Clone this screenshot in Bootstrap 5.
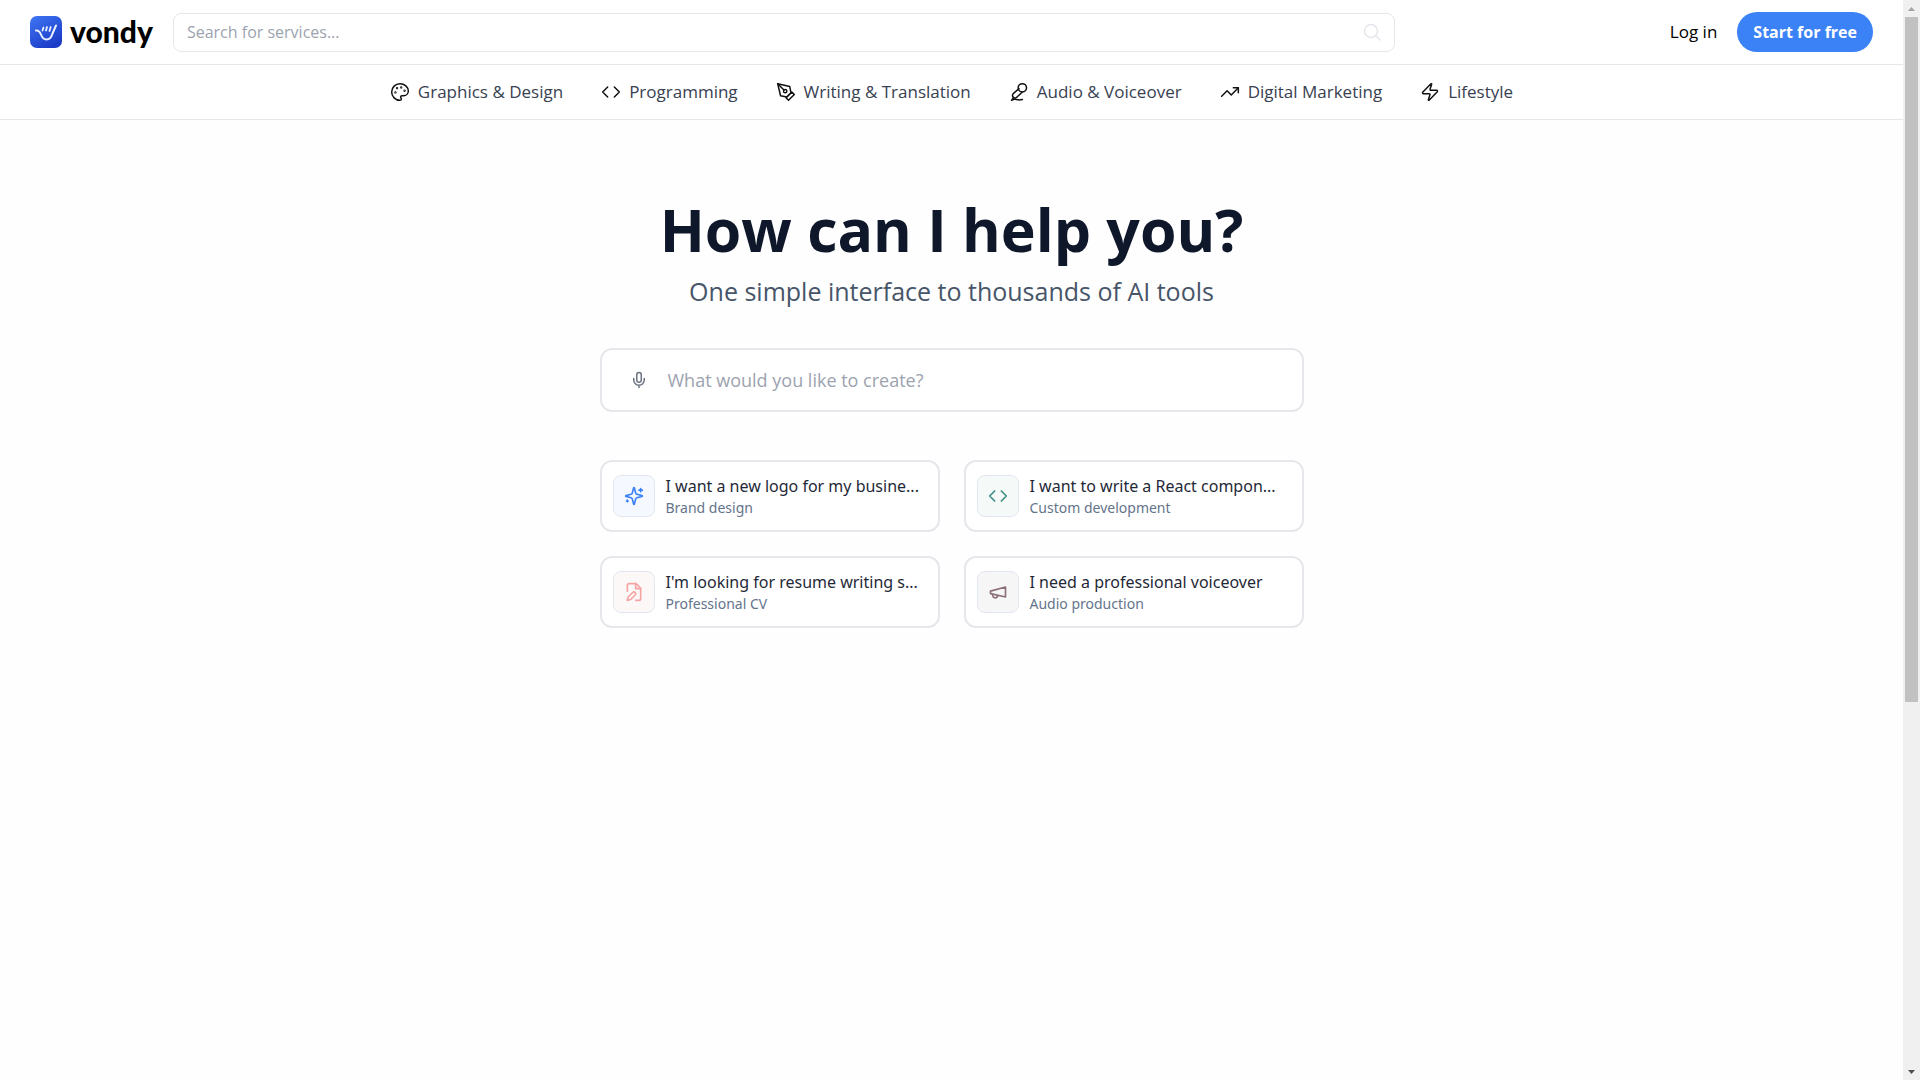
<!DOCTYPE html>
<html lang="en">
<head>
<meta charset="utf-8">
<meta name="viewport" content="width=device-width, initial-scale=1">
<title>Vondy</title>
<link href="https://cdn.jsdelivr.net/npm/bootstrap@5.3.0/dist/css/bootstrap.min.css" rel="stylesheet">
<style>
body{font-family:"Open Sans","Noto Sans",sans-serif;font-size:16px;line-height:24px;color:#1f2937;background:#fefefe}
a{color:inherit;text-decoration:none}
svg{flex:none;display:block}
.line-icon{fill:none;stroke:currentColor;stroke-width:2;stroke-linecap:round;stroke-linejoin:round}
.rule-bottom{border-bottom:1px solid #e5e7eb}
.topbar{height:65px;padding:0 30px}
.brand-link{gap:8px;margin-right:20px}
.wordmark{font-family:Lato,sans-serif;font-weight:900;font-size:30px;line-height:32px;color:#000;padding-bottom:2px}
.site-search{width:66.3%;height:39px;border:1px solid #e5e7eb;border-radius:8px;padding:0 13px}
.bare-input{border:0;outline:0;background:transparent;padding:0;min-width:0}
.bare-input::placeholder{color:#9ca3af;opacity:1}
.login-link{font-size:17px}
.start-btn{height:40px;padding:0 16px;border:0;border-radius:20px;background:#3b82f6;color:#fff;font-weight:700}
.topics{height:55px;gap:38px;color:#374151;font-size:17px}
.topics svg{color:#111;stroke-width:1.8}
.hero-title{font-size:59px;line-height:72px;font-weight:700;color:#0f172a;margin:0}
.hero-sub{font-size:25px;line-height:32px;color:#475569;margin:10px 0 0}
.hero{max-width:704px;padding-top:73px}
.prompt{height:64px;border:2px solid #e5e7eb;border-radius:12px;padding:0 28px;margin-top:41px;gap:20px;font-size:18px;color:#6b7280}
.ideas{margin-top:24px;--bs-gutter-x:24px;--bs-gutter-y:24px;font-family:"Noto Sans",sans-serif}
.idea{height:72px;border:2px solid #e5e7eb;border-radius:12px;padding:0 9px 0 11px;gap:11px;background:#fff}
.idea-icon{width:42px;height:42px;border:1px solid #e2e8f0;border-radius:8px;flex:none}
.idea-title{font-size:16px;line-height:24px;color:#1f2937}
.idea-kind{font-size:14px;line-height:20px;color:#64748b}
.tone-blue{background:#f5f9ff;color:#3b82f6}
.tone-green{background:#f5f9f8;color:#3f8f82}
.tone-red{background:#fdf8f8;color:#f5a3a3}
.tone-brown{background:#f6f6f6;color:#8a6f76}
.scroll-rail{width:17px;height:100vh;background:#f0f0f0;flex:none}
.scroll-thumb{width:13px;height:685px;background:#c1c1c1}
</style>
<script src="https://cdn.jsdelivr.net/npm/bootstrap@5.3.0/dist/js/bootstrap.bundle.min.js"></script>
</head>
<body class="d-flex overflow-hidden">
<div class="flex-grow-1">
  <header class="topbar rule-bottom bg-white d-flex align-items-center">
    <a href="#" class="brand-link d-flex align-items-center" aria-label="vondy home">
      <svg width="32" height="32" viewBox="0 0 32 32">
        <defs><linearGradient id="tile" x1="0" y1="0" x2=".6" y2="1"><stop offset="0" stop-color="#3f77f5"/><stop offset="1" stop-color="#1c3cc8"/></linearGradient></defs>
        <rect width="32" height="32" rx="7" fill="url(#tile)"/>
        <g fill="none" stroke="#e8f0ff" stroke-linecap="round" stroke-linejoin="round" stroke-width="2"><path d="M6 14.500c3-.5 4 1.500 5 4C12 21.500 13.500 23.500 16.500 23.500c3.500 0 5-2.500 6-6L26 9.500"/><path d="M12.500 14.500l1-3M16 14.500l1-3.500M19.500 15l1.200-4" stroke-width="1.800"/></g>
      </svg>
      <span class="wordmark">vondy</span>
    </a>
    <label class="site-search d-flex align-items-center bg-white">
      <input class="bare-input flex-grow-1" type="search" placeholder="Search for services..." aria-label="Search for services">
      <svg width="18" height="18" viewBox="0 0 18 18" fill="none" stroke="#e2e5e9" stroke-width="1.400" stroke-linecap="round"><circle cx="8" cy="8" r="6.500"/><path d="M13 13l4 4"/></svg>
    </label>
    <div class="d-flex align-items-center ms-auto">
      <a href="#" class="login-link text-black me-3 pe-1">Log in</a>
      <button type="button" class="start-btn">Start for free</button>
    </div>
  </header>
  <nav class="topics rule-bottom bg-white d-flex align-items-center justify-content-center" aria-label="Categories">
    <a href="#" class="d-flex align-items-center gap-2"><svg class="line-icon" width="20" height="20" viewBox="0 0 24 24"><circle cx="13.500" cy="6.500" r=".5"/><circle cx="17.500" cy="10.500" r=".5"/><circle cx="8.500" cy="7.500" r=".5"/><circle cx="6.500" cy="12.500" r=".5"/><path d="M12 2C6.500 2 2 6.500 2 12s4.500 10 10 10c.926 0 1.648-.746 1.648-1.688 0-.437-.18-.835-.437-1.125-.29-.289-.438-.652-.438-1.125a1.640 1.640 0 0 1 1.668-1.668h1.996c3.051 0 5.555-2.503 5.555-5.554C21.965 6.012 17.461 2 12 2z"/></svg>Graphics &amp; Design</a>
    <a href="#" class="d-flex align-items-center gap-2"><svg class="line-icon" width="20" height="20" viewBox="0 0 24 24"><path d="M16 18l6-6-6-6M8 6l-6 6 6 6"/></svg>Programming</a>
    <a href="#" class="d-flex align-items-center gap-2"><svg class="line-icon" width="20" height="20" viewBox="0 0 24 24"><path d="M12 19l7-7 3 3-7 7-3-3z"/><path d="M18 13l-1.500-7.500L2 2l3.500 14.500L13 18l5-5z"/><path d="M2 2l7.586 7.586"/><circle cx="11" cy="11" r="2"/></svg>Writing &amp; Translation</a>
    <a href="#" class="d-flex align-items-center gap-2"><svg class="line-icon" width="20" height="20" viewBox="0 0 24 24"><path d="M12 8L5.040 14.010a3 3 0 1 0 4.230 4.260L16 12"/><circle cx="16" cy="7" r="5"/><path d="M5.500 18.500L3 22c2-1 4-1.500 6-1s4 .8 7 0"/></svg>Audio &amp; Voiceover</a>
    <a href="#" class="d-flex align-items-center gap-2"><svg class="line-icon" width="20" height="20" viewBox="0 0 24 24"><path d="M22 7l-8.500 8.500-5-5L2 17"/><path d="M16 7h6v6"/></svg>Digital Marketing</a>
    <a href="#" class="d-flex align-items-center gap-2"><svg class="line-icon" width="20" height="20" viewBox="0 0 24 24"><path d="M4 14a1 1 0 0 1-.78-1.630l9.900-10.200a.5.5 0 0 1 .86.460l-1.920 6.020A1 1 0 0 0 13 10h7a1 1 0 0 1 .78 1.630l-9.900 10.200a.5.5 0 0 1-.86-.46l1.920-6.020A1 1 0 0 0 11 14z"/></svg>Lifestyle</a>
  </nav>
  <main class="hero mx-auto">
    <div class="text-center">
      <h1 class="hero-title">How can I help you?</h1>
      <p class="hero-sub">One simple interface to thousands of AI tools</p>
    </div>
    <label class="prompt bg-white d-flex align-items-center">
      <svg width="18" height="18" viewBox="0 0 24 24" class="line-icon"><path d="M12 2a3 3 0 0 0-3 3v7a3 3 0 0 0 6 0V5a3 3 0 0 0-3-3z"/><path d="M19 10v2a7 7 0 0 1-14 0v-2M12 19v3"/></svg>
      <input class="bare-input flex-grow-1" type="text" placeholder="What would you like to create?" aria-label="What would you like to create?">
    </label>
    <div class="ideas row row-cols-2">
      <div class="col"><a href="#" class="idea d-flex align-items-center">
        <span class="idea-icon tone-blue d-flex align-items-center justify-content-center"><svg class="line-icon" width="20" height="20" viewBox="0 0 24 24"><path d="M9.940 15.500A2 2 0 0 0 8.500 14.060l-6.140-1.580a.5.5 0 0 1 0-.96L8.500 9.940A2 2 0 0 0 9.940 8.500l1.580-6.140a.5.5 0 0 1 .96 0L14.060 8.500A2 2 0 0 0 15.500 9.940l6.140 1.580a.5.5 0 0 1 0 .96L15.500 14.060a2 2 0 0 0-1.440 1.440l-1.580 6.140a.5.5 0 0 1-.96 0z"/><path d="M20 3v4M22 5h-4M4 17v2M5 18H3"/></svg></span>
        <span class="text-nowrap"><span class="idea-title d-block">I want a new logo for my busine...</span><span class="idea-kind d-block">Brand design</span></span></a></div>
      <div class="col"><a href="#" class="idea d-flex align-items-center">
        <span class="idea-icon tone-green d-flex align-items-center justify-content-center"><svg class="line-icon" width="20" height="20" viewBox="0 0 24 24"><path d="M16 18l6-6-6-6M8 6l-6 6 6 6"/></svg></span>
        <span class="text-nowrap"><span class="idea-title d-block">I want to write a React compon...</span><span class="idea-kind d-block">Custom development</span></span></a></div>
      <div class="col"><a href="#" class="idea d-flex align-items-center">
        <span class="idea-icon tone-red d-flex align-items-center justify-content-center"><svg class="line-icon" width="20" height="20" viewBox="0 0 24 24"><path d="M4 11V4a2 2 0 0 1 2-2h8.500L20 7.500V20a2 2 0 0 1-2 2h-4"/><path d="M14 2v6h6"/><path d="M10.400 12.600a2 2 0 1 1 3 3L8 21l-4 1 1-4z"/></svg></span>
        <span class="text-nowrap"><span class="idea-title d-block">I'm looking for resume writing s...</span><span class="idea-kind d-block">Professional CV</span></span></a></div>
      <div class="col"><a href="#" class="idea d-flex align-items-center">
        <span class="idea-icon tone-brown d-flex align-items-center justify-content-center"><svg class="line-icon" width="20" height="20" viewBox="0 0 24 24"><path d="M3 11l18-5v12L3 14v-3z"/><path d="M11.600 16.800a3 3 0 1 1-5.800-1.600"/></svg></span>
        <span class="text-nowrap"><span class="idea-title d-block">I need a professional voiceover</span><span class="idea-kind d-block">Audio production</span></span></a></div>
    </div>
  </main>
</div>
<div class="scroll-rail d-flex flex-column align-items-center" aria-hidden="true">
  <svg width="17" height="17" viewBox="0 0 17 17"><path d="M5 11l3.500-4 3.500 4z" fill="#a3a3a3"/></svg>
  <div class="scroll-thumb"></div>
  <svg class="mt-auto" width="17" height="17" viewBox="0 0 17 17"><path d="M5 7l3.500 4L12 7z" fill="#505050"/></svg>
</div>
</body>
</html>
